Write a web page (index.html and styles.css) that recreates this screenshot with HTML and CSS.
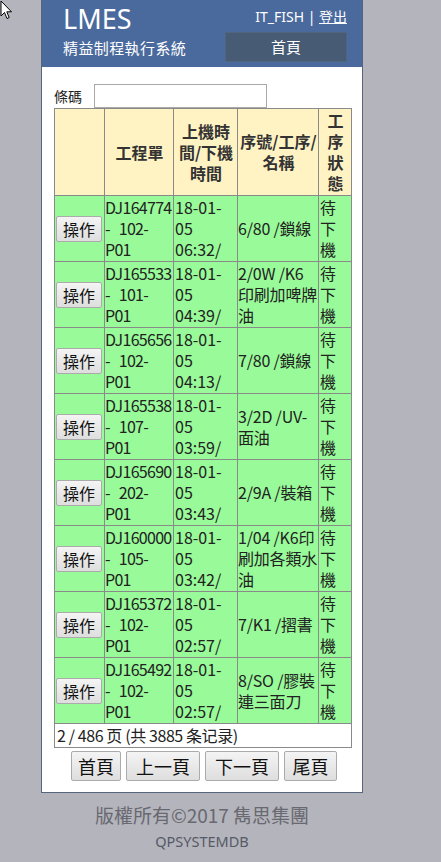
FILE: index.html
```html
<!DOCTYPE html>
<html lang="zh-Hant">
<head>
<meta charset="utf-8">
<title>LMES</title>
<link rel="stylesheet" href="styles.css">
</head>
<body>
<svg class="cursor" width="14" height="21" viewBox="0 0 14 21"><path d="M1 1 L1 16 L4.5 12.5 L7 18.5 L9.2 17.6 L6.8 11.8 L11.5 11.8 Z" fill="#fff" stroke="#000" stroke-width="1"/></svg>
<div class="page">
  <div class="panel">
    <header class="top">
      <div class="brand">
        <div class="logo">LMES</div>
        <div class="sub">精益制程執行系統</div>
      </div>
      <div class="user">
        <div class="who">IT_FISH | <a class="logout" href="#">登出</a></div>
        <div class="nav">首頁</div>
      </div>
    </header>
    <main class="content">
      <div class="search">
        <label class="search-label">條碼</label>
        <input class="search-input" type="text">
      </div>
      <table class="grid">
        <colgroup>
          <col class="c1"><col class="c2"><col class="c3"><col class="c4"><col class="c5">
        </colgroup>
        <thead>
          <tr>
            <th></th>
            <th>工程單</th>
            <th>上機時間/下機時間</th>
            <th>序號/工序/名稱</th>
            <th>工序狀態</th>
          </tr>
        </thead>
        <tbody>
          <tr><td class="op"><button class="btn">操作</button></td><td class="job">DJ164774 - 102-P01</td><td>18-01-05 06:32/</td><td class="step">6/80 /鎖線</td><td>待下機</td></tr>
          <tr><td class="op"><button class="btn">操作</button></td><td class="job">DJ165533 - 101-P01</td><td>18-01-05 04:39/</td><td class="step">2/0W /K6印刷加啤牌油</td><td>待下機</td></tr>
          <tr><td class="op"><button class="btn">操作</button></td><td class="job">DJ165656 - 102-P01</td><td>18-01-05 04:13/</td><td class="step">7/80 /鎖線</td><td>待下機</td></tr>
          <tr><td class="op"><button class="btn">操作</button></td><td class="job">DJ165538 - 107-P01</td><td>18-01-05 03:59/</td><td class="step">3/2D /UV-面油</td><td>待下機</td></tr>
          <tr><td class="op"><button class="btn">操作</button></td><td class="job">DJ165690 - 202-P01</td><td>18-01-05 03:43/</td><td class="step">2/9A /裝箱</td><td>待下機</td></tr>
          <tr><td class="op"><button class="btn">操作</button></td><td class="job">DJ160000 - 105-P01</td><td>18-01-05 03:42/</td><td class="step">1/04 /K6印刷加各類水油</td><td>待下機</td></tr>
          <tr><td class="op"><button class="btn">操作</button></td><td class="job">DJ165372 - 102-P01</td><td>18-01-05 02:57/</td><td class="step">7/K1 /摺書</td><td>待下機</td></tr>
          <tr><td class="op"><button class="btn">操作</button></td><td class="job">DJ165492 - 102-P01</td><td>18-01-05 02:57/</td><td class="step">8/SO /膠裝連三面刀</td><td>待下機</td></tr>
        </tbody>
        <tfoot>
          <tr><td colspan="5" class="count">2 / 486 页 (共 3885 条记录)</td></tr>
        </tfoot>
      </table>
      <div class="pager">
        <button class="btn pg">首頁</button>
        <button class="btn pg wide">上一頁</button>
        <button class="btn pg wide">下一頁</button>
        <button class="btn pg last">尾頁</button>
      </div>
    </main>
  </div>
  <footer class="foot">
    <div class="copy">版權所有©2017 雋思集團</div>
    <div class="db">QPSYSTEMDB</div>
  </footer>
</div>
</body>
</html>
```
FILE: styles.css
```css
html, body {
  margin: 0;
  padding: 0;
}
body {
  background: #b4b4bc;
  font-family: "Noto Sans CJK TC", "Noto Sans", sans-serif;
  color: #222;
}
.cursor {
  position: absolute;
  left: 0;
  top: 0;
}
.page {
  width: 322px;
  margin-left: 41px;
}
.panel {
  background: #fff;
  border: 1px solid #56657a;
  border-top: none;
}
.top {
  background: #4a6a9d;
  height: 67px;
  display: flex;
  justify-content: space-between;
  color: #fff;
}
.brand {
  padding-left: 21px;
}
.logo {
  font-family: "Noto Sans", sans-serif;
  font-size: 27px;
  line-height: 32px;
  padding-top: 3px;
}
.sub {
  font-size: 15px;
  letter-spacing: 0.4px;
  line-height: 20px;
  margin-top: 3px;
}
.user {
  padding-right: 15px;
  display: flex;
  flex-direction: column;
  align-items: flex-end;
}
.who {
  font-family: "Noto Sans", "Noto Sans CJK TC", sans-serif;
  font-size: 14px;
  line-height: 20px;
  padding-top: 7px;
  height: 25px;
}
.logout {
  color: #fff;
  text-decoration: underline;
}
.nav {
  width: 122px;
  height: 30px;
  background: #475c74;
  box-sizing: border-box;
  border: 1px solid #4f6580;
  text-align: center;
  font-size: 15px;
  line-height: 28px;
}
.content {
  padding: 17px 11px 11px 12px;
}
.search {
  display: flex;
  align-items: center;
  height: 24px;
}
.search-label {
  font-size: 14px;
  width: 40px;
  color: #222;
}
.search-input {
  width: 173px;
  height: 24px;
  box-sizing: border-box;
  border: 1px solid #a9a9a9;
  margin: 0;
  padding: 0 2px;
}
.grid {
  width: 297px;
  table-layout: fixed;
  border-collapse: collapse;
  font-size: 16px;
  line-height: 21px;
}
.c1 { width: 50px; }
.c2 { width: 69px; }
.c3 { width: 64px; }
.c4 { width: 81px; }
.c5 { width: 33px; }
.grid th,
.grid td {
  border: 1px solid #8a8a8a;
  padding: 1px 0 1px 1px;
  vertical-align: middle;
}
.grid th {
  background: #fff3c3;
  font-weight: bold;
  text-align: center;
  color: #333;
}
.grid tbody td {
  background: #98fa98;
  text-align: left;
  color: #222;
}
.grid td.job {
  padding-left: 0;
  letter-spacing: -0.7px;
  word-spacing: 6px;
}
.grid td.step {
  padding-left: 0;
  letter-spacing: -0.2px;
}
.grid .count {
  background: #fff;
  padding: 1px 2px;
  letter-spacing: -0.4px;
}
.btn {
  font-family: "Noto Sans CJK TC", sans-serif;
  font-size: 16px;
  line-height: 22px;
  color: #111;
  background: linear-gradient(#f4f4f4, #dedede);
  border: 1px solid #ababab;
  border-radius: 2px;
  padding: 1px 6px;
  margin: 0;
  height: 26px;
}
.pager {
  display: flex;
  justify-content: center;
  gap: 5px;
  margin-top: 3px;
  padding-left: 3px;
}
.pg {
  font-size: 18px;
  height: 30px;
  line-height: 26px;
  padding: 1px 6px;
}
.pg.wide {
  padding: 1px 9px;
}
.pg.last {
  padding: 1px 7.5px;
}
.foot {
  text-align: center;
  padding-top: 10px;
}
.copy {
  font-size: 19px;
  line-height: 24px;
  color: #686870;
}
.db {
  font-family: "Noto Sans", sans-serif;
  font-size: 14.5px;
  line-height: 20px;
  margin-top: 4px;
  color: #555a66;
}
```
